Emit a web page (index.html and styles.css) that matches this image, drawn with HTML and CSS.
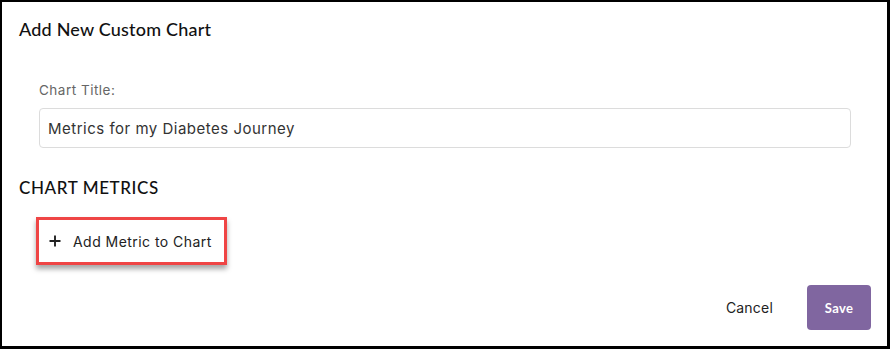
FILE: index.html
```html
<!DOCTYPE html>
<html>
<head>
<meta charset="utf-8">
<link rel="stylesheet" href="styles.css">
</head>
<body>
<div class="dialog">
  <h1 class="title">Add New Custom Chart</h1>
  <div class="field">
    <label class="label">Chart Title:</label>
    <div class="input">Metrics for my Diabetes Journey</div>
  </div>
  <h2 class="section">CHART METRICS</h2>
  <div class="add-wrap">
    <button class="add-btn">
      <svg class="plus" width="12" height="12" viewBox="0 0 12 12"><path d="M6 0.5V11.5M0.5 6H11.5" stroke="#222" stroke-width="1.9" fill="none"/></svg>
      <span>Add Metric to Chart</span>
    </button>
  </div>
  <div class="footer">
    <button class="cancel">Cancel</button>
    <button class="save">Save</button>
  </div>
</div>
</body>
</html>
```

FILE: styles.css
```css
html, body {
  margin: 0;
  padding: 0;
  background: #fff;
}
.dialog {
  box-sizing: border-box;
  width: 890px;
  height: 349px;
  border: 2px solid #000;
  border-right-width: 3px;
  border-bottom-width: 3px;
  padding: 0 16px 0 17px;
  display: flex;
  flex-direction: column;
  font-family: Inter, "Liberation Sans", sans-serif;
  color: #222;
}
.title {
  margin: 15px 0 0;
  font-family: Lato, "Noto Sans", sans-serif;
  font-weight: 500;
  font-size: 18px;
  letter-spacing: 0.2px;
  line-height: 24px;
  color: #111;
}
.field {
  padding: 0 20px;
  margin-top: 40px;
  display: flex;
  flex-direction: column;
}
.label {
  font-size: 13.5px;
  letter-spacing: 0.5px;
  line-height: 18px;
  color: #666;
}
.input {
  box-sizing: border-box;
  margin-top: 9px;
  height: 40px;
  border: 1px solid #dcdcdc;
  border-radius: 4px;
  padding: 0 8px;
  display: flex;
  align-items: center;
  font-size: 15px;
  letter-spacing: 0.5px;
  color: #333;
}
.section {
  margin: 28px 0 0;
  font-family: Lato, "Noto Sans", sans-serif;
  font-weight: 500;
  font-size: 17px;
  letter-spacing: 0.6px;
  line-height: 24px;
  color: #111;
}
.add-wrap {
  display: flex;
  margin-top: 17px;
  padding-left: 17px;
}
.add-btn {
  box-sizing: border-box;
  width: 191px;
  height: 48px;
  border: 3px solid #ef4545;
  background: #fff;
  box-shadow: 0 4px 5px rgba(0,0,0,0.35);
  display: flex;
  align-items: center;
  gap: 12px;
  padding: 0 0 0 10px;
  font-family: Inter, "Liberation Sans", sans-serif;
  font-size: 14px;
  letter-spacing: 0.45px;
  color: #222;
}
.plus {
  flex: none;
}
.footer {
  margin-top: 20px;
  display: flex;
  justify-content: flex-end;
  align-items: center;
  gap: 34px;
}
.cancel {
  border: none;
  background: none;
  padding: 0;
  font-family: Inter, "Liberation Sans", sans-serif;
  font-size: 14px;
  letter-spacing: 0.2px;
  color: #222;
}
.save {
  width: 64px;
  height: 45px;
  border: none;
  border-radius: 4px;
  background: #8066a0;
  color: #fff;
  font-family: Lato, "Noto Sans", sans-serif;
  font-weight: 700;
  font-size: 13px;
  letter-spacing: 0.3px;
}
```
